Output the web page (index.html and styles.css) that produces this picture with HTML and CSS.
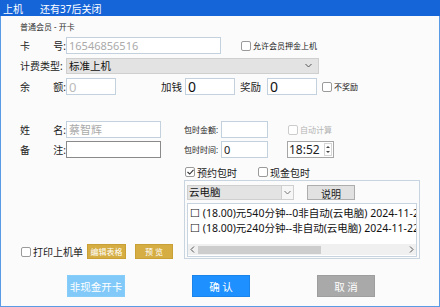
FILE: index.html
```html
<!DOCTYPE html>
<html lang="zh-CN">
<head>
    <meta charset="UTF-8">
    <title>上机</title>
    <link rel="stylesheet" href="styles.css">
</head>
<body>

<div class="window">
    <div class="titlebar">
        <span>上机</span>
        <span class="countdown">还有37后关闭</span>
    </div>

    <div class="content">
        <div class="subtitle">普通会员 - 开卡</div>

        <div class="row row-first">
            <label class="lbl"><span>卡</span><span>号:</span></label>
            <input class="field field-card" placeholder="16546856516">
            <label class="check small check-deposit"><span class="box"></span>允许会员押金上机</label>
        </div>

        <div class="row">
            <label class="lbl"><span>计费类型:</span></label>
            <div class="select select-type">
                <span>标准上机</span>
                <svg class="chev" width="7" height="5" viewBox="0 0 7 5"><polyline points="0.5,1 3.5,4 6.5,1" fill="none" stroke="#555" stroke-width="1"/></svg>
            </div>
        </div>

        <div class="row row-money">
            <label class="lbl"><span>余</span><span>额:</span></label>
            <input class="field field-short field-muted" value="0">
            <span class="lbl-inline lbl-add">加钱</span>
            <input class="field field-short field-big" value="0">
            <span class="lbl-inline lbl-bonus">奖励</span>
            <input class="field field-short field-big" value="0">
            <label class="check small check-nobonus"><span class="box"></span>不奖励</label>
        </div>

        <div class="lower">
            <div class="col-left">
                <div class="row">
                    <label class="lbl"><span>姓</span><span>名:</span></label>
                    <input class="field field-name" placeholder="蔡智辉">
                </div>
                <div class="row row-gap">
                    <label class="lbl"><span>备</span><span>注:</span></label>
                    <input class="field field-name field-dark">
                </div>
                <div class="print-row">
                    <label class="check"><span class="box"></span>打印上机单</label>
                    <button class="btn-gold btn-edit">编辑表格</button>
                    <button class="btn-gold btn-preview">预 览</button>
                </div>
            </div>

            <div class="col-right">
                <div class="row">
                    <span class="lbl-small">包时金额:</span>
                    <input class="field field-pack">
                    <label class="check small disabled check-auto"><span class="box"></span>自动计算</label>
                </div>
                <div class="row row-gap">
                    <span class="lbl-small">包时时间:</span>
                    <input class="field field-pack field-mid" value="0">
                    <div class="time">
                        <span>18:52</span>
                        <div class="spin">
                            <span class="tri up"></span>
                            <span class="tri down"></span>
                        </div>
                    </div>
                </div>
                <div class="check-row">
                    <label class="check"><span class="box checked"><svg width="7" height="6" viewBox="0 0 7 6"><polyline points="0.5,3 2.7,5 6.5,0.8" fill="none" stroke="#333" stroke-width="1.1"/></svg></span>预约包时</label>
                    <label class="check check-cash"><span class="box"></span>现金包时</label>
                </div>
                <div class="group">
                    <div class="group-top">
                        <div class="select select-pc">
                            <span class="select-text">云电脑</span>
                            <span class="select-arrow"><svg width="7" height="5" viewBox="0 0 7 5"><polyline points="0.5,1 3.5,4 6.5,1" fill="none" stroke="#777" stroke-width="1"/></svg></span>
                        </div>
                        <button class="btn-plain">说明</button>
                    </div>
                    <div class="list">
                        <div class="list-items">
                            <div class="list-item">☐ (18.00)元540分钟--0非自动(云电脑) 2024-11-22 18:52</div>
                            <div class="list-item">☐ (18.00)元240分钟--非自动(云电脑) 2024-11-22 18:52</div>
                        </div>
                        <div class="hscroll">
                            <svg width="5" height="7" viewBox="0 0 5 7"><polyline points="4,0.5 1,3.5 4,6.5" fill="none" stroke="#555" stroke-width="1"/></svg>
                            <div class="track"><div class="thumb"></div></div>
                            <svg width="5" height="7" viewBox="0 0 5 7"><polyline points="1,0.5 4,3.5 1,6.5" fill="none" stroke="#555" stroke-width="1"/></svg>
                        </div>
                    </div>
                </div>
            </div>
        </div>

        <div class="actions">
            <button class="btn btn-noncash">非现金开卡</button>
            <button class="btn btn-ok">确 认</button>
            <button class="btn btn-cancel">取 消</button>
        </div>
    </div>
</div>

</body>
</html>
```

FILE: styles.css
```css
body {
    margin: 0;
    padding: 0;
    background-color: #fbfbfb;
    font-family: 'Noto Sans', 'Noto Sans CJK SC', sans-serif;
    color: #333;
}
button, input {
    font-family: inherit;
}
.window {
    width: 440px;
    height: 307px;
    display: flex;
    flex-direction: column;
}
.titlebar {
    height: 16px;
    background-color: #1565d9;
    color: #ffffff;
    font-size: 10px;
    display: flex;
    align-items: center;
    padding-left: 3px;
    flex-shrink: 0;
}
.countdown {
    margin-left: 17px;
}
.content {
    flex: 1;
    border: 1px solid #5b9be6;
    border-top: none;
    padding-left: 19px;
    background-color: #fbfbfb;
}
.subtitle {
    margin-top: 6px;
    font-size: 8px;
    line-height: 10px;
    color: #333;
}
.row {
    display: flex;
    align-items: center;
    height: 17px;
}
.row-first {
    margin-top: 5px;
    margin-bottom: 3px;
}
.row-money {
    margin-top: 4px;
}
.row-gap {
    margin-top: 3px;
}
.lbl {
    width: 46px;
    display: flex;
    justify-content: space-between;
    font-size: 10px;
    color: #222;
    white-space: nowrap;
    flex-shrink: 0;
}
.lbl-inline {
    font-size: 10.5px;
    color: #222;
}
.lbl-add {
    margin-left: 45px;
    margin-right: 3px;
}
.lbl-bonus {
    margin-left: 5px;
    margin-right: 6px;
}
.lbl-small {
    font-size: 8px;
    width: 37px;
    color: #222;
}

/* inputs */
.field {
    box-sizing: border-box;
    height: 17px;
    border: 1px solid #c3d0de;
    background: #ffffff;
    padding: 0 2px;
    font-size: 11px;
    color: #222;
    outline: none;
    margin: 0;
}
.field::placeholder {
    color: #aaaaaa;
}
.field-card {
    width: 155px;
}
.field-short {
    width: 50px;
}
.field-muted {
    color: #bbbbbb;
    font-size: 13px;
}
.field-big {
    font-size: 14px;
    color: #111;
}
.field-name {
    width: 95px;
    font-size: 11px;
}
.field-dark {
    border-color: #8a8a8a;
}
.field-pack {
    width: 47px;
}
.field-mid {
    font-size: 11px;
}

/* selects */
.select {
    box-sizing: border-box;
    height: 16px;
    display: flex;
    align-items: center;
    font-size: 10.5px;
    color: #111;
}
.select-type {
    width: 253px;
    background: #e3e3e3;
    border: 1px solid #cfcfcf;
    padding: 0 6px 0 2px;
    justify-content: space-between;
}
.select-pc {
    width: 107px;
    height: 15px;
    border: 1px solid #cfcfcf;
    background: #f6f6f6;
}
.select-text {
    width: 94px;
    height: 100%;
    box-sizing: border-box;
    background: #e3e3e3;
    border-right: 1px solid #cfcfcf;
    padding-left: 1px;
    line-height: 13px;
}
.select-arrow {
    flex: 1;
    display: flex;
    justify-content: center;
}

/* checkboxes */
.check {
    display: flex;
    align-items: center;
    font-size: 10px;
    color: #222;
    white-space: nowrap;
}
.check.small {
    font-size: 8px;
}
.check.disabled {
    color: #b4b4b4;
}
.box {
    box-sizing: border-box;
    width: 10px;
    height: 10px;
    border: 1px solid #9a9a9a;
    border-radius: 2px;
    background: #ffffff;
    margin-right: 2px;
    display: flex;
    align-items: center;
    justify-content: center;
}
.check.disabled .box {
    border-color: #cccccc;
}
.check-deposit {
    margin-left: 20px;
}
.check-nobonus {
    margin-left: 5px;
}
.check-auto {
    margin-left: 20px;
}
.check-cash {
    margin-left: 21px;
}

/* lower area */
.lower {
    display: flex;
    margin-top: 26px;
    height: 138px;
}
.col-left {
    width: 164px;
    display: flex;
    flex-direction: column;
}
.print-row {
    margin-top: auto;
    display: flex;
    align-items: center;
    height: 15px;
    padding-left: 1px;
}
.btn-gold {
    box-sizing: border-box;
    height: 15px;
    background: #d5ad42;
    border: 1px solid #c9a036;
    color: #ffffff;
    font-size: 8px;
    padding: 0;
    cursor: pointer;
}
.btn-edit {
    width: 39px;
    margin-left: 4px;
}
.btn-preview {
    width: 38px;
    margin-left: 9px;
}
.col-right {
    display: flex;
    flex-direction: column;
}
.time {
    box-sizing: border-box;
    width: 47px;
    height: 17px;
    margin-left: 19px;
    border: 1px solid #a6a6a6;
    background: #fff;
    display: flex;
    align-items: center;
    justify-content: space-between;
    padding-left: 1px;
    font-size: 12px;
    color: #222;
}
.spin {
    width: 8px;
    height: 13px;
    margin-right: 1px;
    border: 1px solid #d6d6d6;
    display: flex;
    flex-direction: column;
    box-sizing: border-box;
}
.tri {
    flex: 1;
    display: flex;
    align-items: center;
    justify-content: center;
}
.tri::after {
    content: "";
    border-left: 2px solid transparent;
    border-right: 2px solid transparent;
}
.tri.up::after {
    border-bottom: 2px solid #444;
}
.tri.down::after {
    border-top: 2px solid #444;
}
.check-row {
    display: flex;
    align-items: center;
    height: 12px;
    margin-top: 8px;
    padding-left: 1px;
}
.group {
    box-sizing: border-box;
    margin-top: 2px;
    width: 236px;
    height: 79px;
    border: 1px solid #c8d4e0;
    padding: 4px 2px 1px 2px;
    display: flex;
    flex-direction: column;
}
.group-top {
    display: flex;
    align-items: center;
    height: 15px;
}
.btn-plain {
    box-sizing: border-box;
    width: 48px;
    height: 15px;
    margin-left: 13px;
    background: #e1e1e1;
    border: 1px solid #adadad;
    font-size: 10px;
    color: #222;
    padding: 0;
}
.list {
    flex: 1;
    margin-top: 3px;
    border: 1px solid #c8d4e0;
    background: #ffffff;
    display: flex;
    flex-direction: column;
    overflow: hidden;
}
.list-items {
    flex: 1;
    padding: 2px 0 0 2px;
    overflow: hidden;
}
.list-item {
    font-size: 10.5px;
    line-height: 15px;
    white-space: nowrap;
    color: #111;
}
.hscroll {
    height: 11px;
    margin-bottom: 1px;
    background: #f0f0f0;
    display: flex;
    align-items: center;
    padding: 0 2px;
    gap: 3px;
}
.track {
    flex: 1;
    height: 8px;
}
.thumb {
    width: 123px;
    height: 100%;
    background: #cdcdcd;
}

/* action buttons */
.actions {
    display: flex;
    gap: 67px;
    margin-top: 16px;
    padding-left: 47px;
}
.btn {
    box-sizing: border-box;
    width: 58px;
    height: 22px;
    color: #ffffff;
    font-size: 10.5px;
    border: 1px solid transparent;
    padding: 0;
    cursor: pointer;
}
.btn-noncash {
    background: #80c9f8;
    border-color: #86cdf9;
}
.btn-ok {
    background: #1e90ff;
    border-color: #1a84ea;
}
.btn-cancel {
    background: #a9a9a9;
    border-color: #9e9e9e;
}
```
